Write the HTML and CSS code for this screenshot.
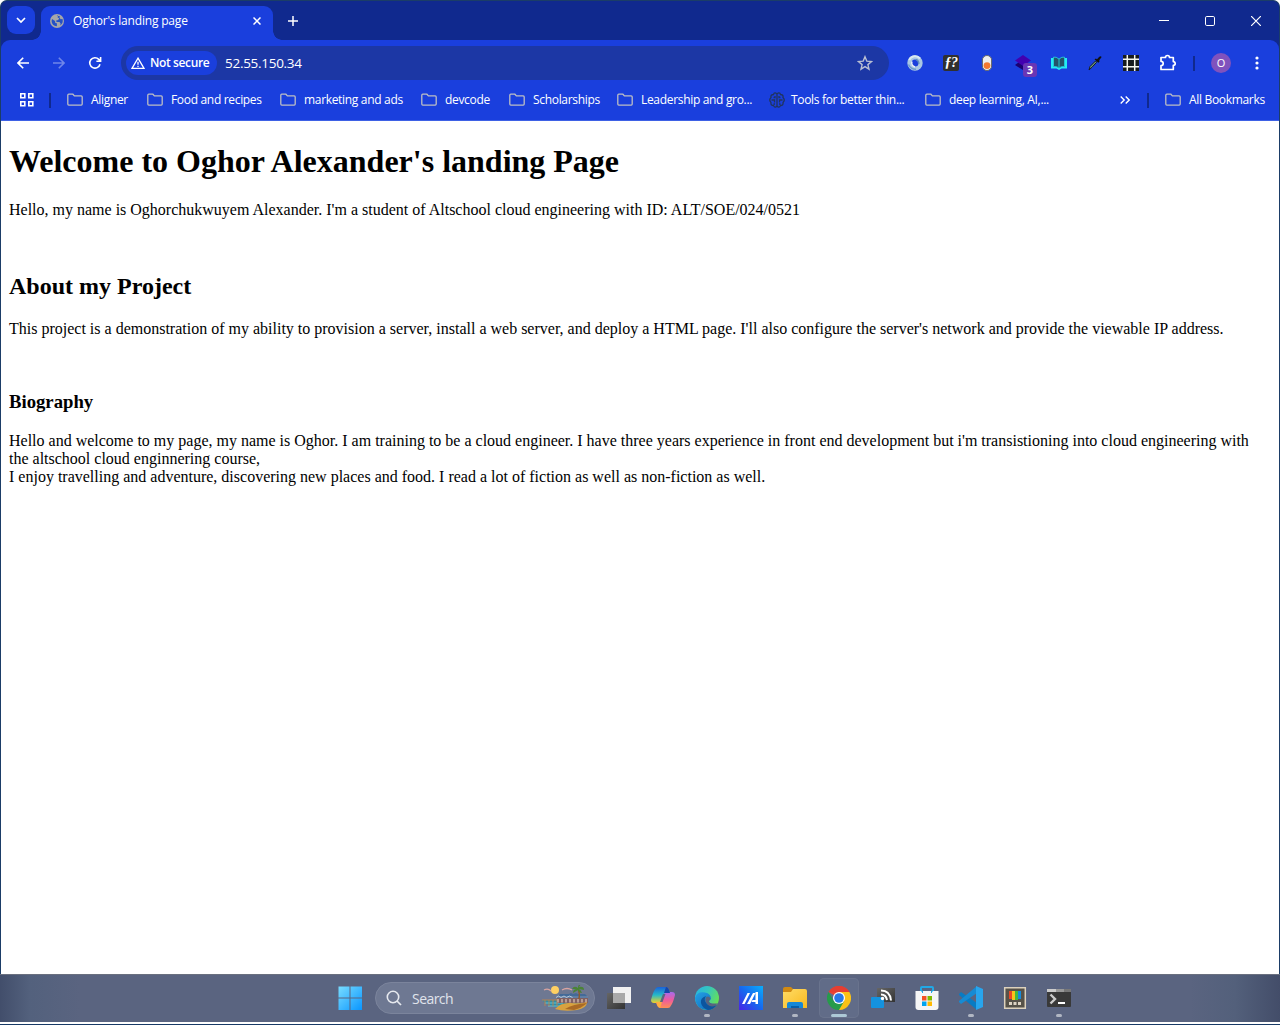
FILE: index.html
```html
<!DOCTYPE html>
<html lang="en">
<head>
<meta charset="utf-8">
<title>Oghor's landing page</title>
<link rel="stylesheet" href="styles.css">
</head>
<body>
<svg width="0" height="0" class="defs">
  <defs>
    <symbol id="folder" viewBox="0 0 16 14"><path d="M.8 2.2q0-1 1-1h4.1l1.5 1.7h6.8q1 0 1 1v7.2q0 1-1 1H1.8q-1 0-1-1z" fill="none" stroke="#bdbfc4" stroke-width="1.3"/></symbol>
    <linearGradient id="winBlue" x1="0" y1="0" x2="1" y2="1"><stop offset="0" stop-color="#79dcff"/><stop offset="1" stop-color="#0996ff"/></linearGradient>
    <linearGradient id="cop1" x1="0" y1="0" x2="0" y2="1"><stop offset="0" stop-color="#1b62d8"/><stop offset=".5" stop-color="#24b9c9"/><stop offset="1" stop-color="#f0d326"/></linearGradient>
    <linearGradient id="cop2" x1="0" y1="0" x2="0" y2="1"><stop offset="0" stop-color="#a66bed"/><stop offset=".5" stop-color="#ee5b9e"/><stop offset="1" stop-color="#ff8d55"/></linearGradient>
    <linearGradient id="edgeTop" x1="0" y1="0" x2="1" y2=".5"><stop offset="0" stop-color="#26b3e8"/><stop offset=".5" stop-color="#35c6bd"/><stop offset="1" stop-color="#65df5a"/></linearGradient>
    <linearGradient id="edgeLow" x1="0" y1="0" x2="1" y2="1"><stop offset="0" stop-color="#25a1e5"/><stop offset="1" stop-color="#0b65b9"/></linearGradient>
    <linearGradient id="asus" x1="0" y1="1" x2="1" y2="0"><stop offset="0" stop-color="#4b22e6"/><stop offset=".5" stop-color="#1768ef"/><stop offset="1" stop-color="#09aefb"/></linearGradient>
    <linearGradient id="fold" x1="0" y1="0" x2="1" y2="1"><stop offset="0" stop-color="#ffdc66"/><stop offset="1" stop-color="#f9b91e"/></linearGradient>
    <linearGradient id="gray" x1="0" y1="0" x2="1" y2="1"><stop offset="0" stop-color="#666"/><stop offset="1" stop-color="#333"/></linearGradient>
  </defs>
</svg>

<div class="window">
  <header class="tabstrip">
    <button class="tab-search" aria-label="Search tabs"><svg width="28" height="28" viewBox="0 0 28 28"><path d="M10 12l4 4 4-4" fill="none" stroke="#fff" stroke-width="1.7"/></svg></button>
    <div class="tab">
      <svg width="14" height="14" viewBox="0 0 14 14"><circle cx="7" cy="7" r="7" fill="#a5a6a9"/><path d="M2 5l3 2 .3 2 1.600.3v3A5.600 5.600 0 0 1 1.600 7zM6.200 1.500L8 1.600 7.600 3.400l1.600.8-1 1.800-2 .4.3 1.500 3 .2 1.200 1.600-.8 1.800a5.600 5.600 0 0 0 2.600-6.400l-1.800.2-1.200-1.500L9.800 2z" fill="#2451c7"/></svg>
      <span class="tab-title">Oghor's landing page</span>
      <svg class="tab-close" width="8" height="8" viewBox="0 0 8 8"><path d="M.5.5l7 7m0-7l-7 7" stroke="#fff" stroke-width="1.500"/></svg>
    </div>
    <svg class="new-tab" width="10" height="10" viewBox="0 0 10 10"><path d="M5 0v10M0 5h10" stroke="#fff" stroke-width="1.500"/></svg>
    <div class="controls">
      <svg width="10" height="10" viewBox="0 0 10 10"><path d="M0 4.500h10" stroke="#fff"/></svg>
      <svg width="10" height="10" viewBox="0 0 10 10"><rect x=".5" y=".5" width="9" height="9" rx="1.300" fill="none" stroke="#fff"/></svg>
      <svg width="10" height="10" viewBox="0 0 10 10"><path d="M0 0l10 10M10 0L0 10" stroke="#fff" stroke-width="1.200"/></svg>
    </div>
  </header>

  <div class="chrome">
    <div class="toolbar">
      <svg width="12" height="12" viewBox="0 0 12 12"><path d="M12 6H1M6.200.8L1 6l5.200 5.200" fill="none" stroke="#fff" stroke-width="1.600"/></svg>
      <svg class="forward" width="12" height="12" viewBox="0 0 12 12"><path d="M0 6h11M5.800.8L11 6l-5.200 5.200" fill="none" stroke="#6f86e9" stroke-width="1.600"/></svg>
      <svg class="reload" width="14" height="14" viewBox="0 0 14 14"><path d="M12 8.200A5.200 5.200 0 1 1 10.800 3.400l1.400 1.300M12.600.9v4.300H8.400" fill="none" stroke="#fff" stroke-width="1.600"/></svg>
      <div class="omnibox">
        <div class="security">
          <svg width="14" height="12" viewBox="0 0 14 12"><path d="M7 1.200L13 11.300H1z" fill="none" stroke="#fff" stroke-width="1.300"/><path d="M7 4.700v3M7 8.700v1.200" stroke="#fff" stroke-width="1.300"/></svg>
          <span>Not secure</span>
        </div>
        <span class="url">52.55.150.34</span>
        <svg class="star" width="16" height="16" viewBox="0 0 16 16"><path d="M8 1.700l1.800 4.400 4.700.4-3.600 3.100 1.100 4.600L8 11.700l-4 2.500 1.100-4.600L1.500 6.500l4.700-.4z" fill="none" stroke="#b9bfd3" stroke-width="1.400"/></svg>
      </div>
      <div class="extensions">
        <svg width="16" height="16" viewBox="0 0 16 16"><circle cx="8" cy="8" r="5.600" fill="none" stroke="#a9c7e3" stroke-width="4.200"/><path d="M2.200 5A6.500 6.500 0 0 1 13 3.500" fill="none" stroke="#d9e9f2" stroke-width="2"/><path d="M5 6.500A4 4 0 0 0 8 12" fill="none" stroke="#e5eff7" stroke-width="1.500"/><path d="M9 4.500Q12 5.500 11.800 9" fill="none" stroke="#608fc2" stroke-width="1.500"/><path d="M1.500 9.500Q4 14.500 9 14.300" fill="none" stroke="#6e9dcc" stroke-width="1.500"/></svg>
        <div class="ext-f"><span>ƒ?</span></div>
        <svg width="16" height="16" viewBox="0 0 16 16"><rect x="3.400" y=".5" width="9.200" height="15" rx="4.500" fill="#eee" stroke="#666"/><circle cx="8" cy="10.600" r="3.400" fill="#f5782f"/></svg>
        <div class="ext-badged">
          <svg width="16" height="16" viewBox="0 0 16 16"><path d="M0 10l7-5 9 5-8 5z" fill="#190070"/><path d="M0 5.500L8 0l8 5.500L8 11z" fill="#4200b0"/></svg>
          <span class="badge">3</span>
        </div>
        <svg width="16" height="16" viewBox="0 0 16 16"><path d="M0 3h2.500v9H6l2 1.300 2-1.300h3.500V3H16v10.500h-5.500L8 15l-2.500-1.500H0z" fill="#23edf3"/><path d="M2.500 2.200Q5 1.500 8 4q3-2.500 5.500-1.800v9.300Q10 11 8 13q-2-2-5.500-1.500z" fill="#24536a" stroke="#23dce3" stroke-width=".8"/><path d="M8 4v8.500" stroke="#27c6cc"/></svg>
        <svg width="16" height="16" viewBox="0 0 16 16"><path d="M2 15L3 11.500l5.500-5.500 1.200 1.200L5 12.200z" fill="#6d9b82" stroke="#171b22"/><path d="M7.500 4.500l1.300-1 1.200.7 2.300-2.500q2-1.200 2.200.5L12.200 5.200l.3 1.300-1 1.300z" fill="#111"/></svg>
        <svg width="16" height="16" viewBox="0 0 16 16"><path d="M0 0h16v16H0z" fill="#161a1c"/><path d="M4.300 0v16M11.700 0v16M0 4.300h16M0 11.700h16" stroke="#f5f5ed" stroke-width="1.500"/></svg>
        <svg width="18" height="18" viewBox="0 0 18 18"><path d="M2 3.500h4.500a2 2 0 0 1 4 0H14.300v4.100a1.900 1.900 0 0 1 0 3.800v4.100H2v-3.800a2.200 2.200 0 0 0 0-4.400z" fill="none" stroke="#fff" stroke-width="1.700" stroke-linejoin="round"/></svg>
      </div>
      <i class="divider"></i>
      <span class="avatar">O</span>
      <svg class="menu" width="4" height="14" viewBox="0 0 4 14"><g fill="#fff"><circle cx="2" cy="2" r="1.600"/><circle cx="2" cy="7" r="1.600"/><circle cx="2" cy="12" r="1.600"/></g></svg>
    </div>

    <nav class="bookmarks">
      <svg width="16" height="16" viewBox="0 0 16 16"><path d="M1.800 1.800h4v4h-4zM9.800 1.800h4v4h-4zM1.800 9.800h4v4h-4zM9.800 9.800h4v4h-4z" fill="none" stroke="#fff" stroke-width="1.600"/></svg>
      <i class="divider"></i>
      <div class="bookmark-list">
        <div><svg width="16" height="14"><use href="#folder"/></svg><span>Aligner</span></div>
        <div><svg width="16" height="14"><use href="#folder"/></svg><span>Food and recipes</span></div>
        <div><svg width="16" height="14"><use href="#folder"/></svg><span>marketing and ads</span></div>
        <div><svg width="16" height="14"><use href="#folder"/></svg><span>devcode</span></div>
        <div><svg width="16" height="14"><use href="#folder"/></svg><span>Scholarships</span></div>
        <div><svg width="16" height="14"><use href="#folder"/></svg><span>Leadership and gro...</span></div>
        <div class="site"><svg width="16" height="16" viewBox="0 0 16 16"><path d="M8 1.200v13.600M8 2Q5.500-.5 4.500 2.500 1.500 2.500 2 5.500-.5 8 2 10.500q-.5 3 2.500 3Q6 16.500 8 14M8 2q2.500-2.500 3.500.5 3 0 2.500 3 2.500 2.500 0 5 .5 3-2.500 3Q10 16.500 8 14M4.500 5.500H6V4M2.500 8h3v2.500M11.500 5.500H10V4M13.500 8h-3v2.500M4.500 12H6M10 12h1.500" fill="none" stroke="#20345f" stroke-width="1.300"/></svg><span>Tools for better thin...</span></div>
        <div><svg width="16" height="14"><use href="#folder"/></svg><span>deep learning, AI,...</span></div>
      </div>
      <svg class="more" width="10" height="8" viewBox="0 0 10 8"><path d="M.7.500L4.200 4 .7 7.500M5.700.500L9.200 4 5.700 7.500" fill="none" stroke="#fff" stroke-width="1.400"/></svg>
      <i class="divider"></i>
      <div class="all"><svg width="16" height="14"><use href="#folder"/></svg><span>All Bookmarks</span></div>
    </nav>
  </div>

  <main class="page">
    <h1>Welcome to Oghor Alexander's landing Page</h1>
    <p>Hello, my name is Oghorchukwuyem Alexander. I'm a student of Altschool cloud engineering with ID: ALT/SOE/024/0521</p>
    <br>
    <h2>About my Project</h2>
    <p>This project is a demonstration of my ability to provision a server, install a web server, and deploy a HTML page. I'll also configure the server's network and provide the viewable IP address.</p>
    <br>
    <h3>Biography</h3>
    <p>Hello and welcome to my page, my name is Oghor. I am training to be a cloud engineer. I have three years experience in front end development but i'm transistioning into cloud engineering with the altschool cloud enginnering course,<br>I enjoy travelling and adventure, discovering new places and food. I read a lot of fiction as well as non-fiction as well.</p>
  </main>
</div>

<footer class="taskbar">
  <svg class="start" width="24" height="24" viewBox="0 0 24 24"><path d="M.5.500H11.500v11H.5zM12.500.500H24v11H12.500zM.5 12.500h11V24H.5zM12.500 12.500H24V24H12.500z" fill="url(#winBlue)"/></svg>
  <div class="search">
    <svg width="16" height="16" viewBox="0 0 16 16"><circle cx="7" cy="7" r="5.700" fill="none" stroke="#e6e9ef" stroke-width="1.600"/><path d="M11 11l4 4" stroke="#e6e9ef" stroke-width="1.700"/></svg>
    <span>Search</span>
    <svg class="scene" width="47" height="26" viewBox="0 0 47 26">
      <path d="M0 15h30l14 2-6 5-16 1q-14-1-20-6z" fill="#328ba6"/><path d="M3 18h18M6 21h16" stroke="#62bfd0"/>
      <path d="M0 15h16M3 15v6M7 15v6M11 15v6M15 14v7" stroke="#bd854a" stroke-width=".9"/>
      <path d="M15 12l3-3h9l2-1 2 1 3-1 2 1h7l3 3v2H15z" fill="#436a98"/><path d="M15 13h31v5H15z" fill="#806062"/><path d="M15 12h31" stroke="#7c92b0"/><path d="M16 14v3.500m4-3.500v3.500m4-3.500v3.500m4-3.500v3.500m4-3.500v3.500m4-3.500v3.500m4-3.500v3.500m4-3.500v3.500" stroke="#dcc4b2" stroke-width="1.200"/>
      <path d="M14 12.500l2.500-1.500 2.500 1.500 3-1.500 2.500 1.500 3-1.500 3 1.500" fill="none" stroke="#d0dbe4" stroke-width=".8"/>
      <path d="M13 24q6-7 16-6 10 1 16-1 0 6-10 8-13 2-22-1z" fill="#d9a23f"/><path d="M23 24q8-5 22-6-5 5-13 7z" fill="#aa6a25"/>
      <circle cx="13" cy="5" r="4" fill="#ffd063"/><path d="M2 5q4-2 7 1M20 5q5-3 10 0" stroke="#d9a4a0" stroke-width="1.300" fill="none"/>
      <path d="M36 4q2 4 1 10" fill="none" stroke="#8f5a2c" stroke-width="1.500"/><path d="M36 3q-4-3-6 1l5 0q-4 0-4 4l5-3q1 3 4 3-1-3-3-4l5 1q0-4-5-3l2-3q-3 0-3 4z" fill="#4a8435"/>
    </svg>
  </div>
  <div class="apps">
    <div><svg width="24" height="24" viewBox="0 0 24 24"><path d="M0 7h18v16H0z" fill="url(#gray)"/><path d="M6 1h18v16H6z" fill="#f1f1f1"/><path d="M6 7h12v10H6z" fill="#a9a9a9"/></svg></div>
    <div><svg width="24" height="24" viewBox="0 0 24 24"><path d="M7 1h8q2 0 3 3l1 3h-3q-3 0-4 4l-1 4q-1 2-3 2H3q-3 0-3-3Q2 6 4 3.500 5 1 7 1z" fill="url(#cop1)"/><path d="M17 22H9q-2 0-3-3l-1-3h3q3 0 4-4l1-4q1-2 3-2h5q3 0 3 3-2 8-4 10.500Q19 22 17 22z" fill="url(#cop2)"/><path d="M15 1q2 0 3 3l1 3h-6z" fill="#1646aa"/><path d="M9 22q-2 0-3-3l-1-3h6z" fill="#ffae3f"/><path d="M12 8h2.500l-3 8H9z" fill="#59647f"/></svg></div>
    <div class="running"><svg width="24" height="24" viewBox="0 0 24 24"><circle cx="12" cy="12" r="12" fill="url(#edgeTop)"/><path d="M0 12Q2 5 10 6.500q6 1.200 6 6.500l-3 3 8 3.500Q17 24 12 24 1 23 0 12z" fill="url(#edgeLow)"/><path d="M11 10q-6 2-5 7 1 5 7 7 5 0 9-5-6 2-10-1-4-4-1-8z" fill="#0c559e"/><path d="M13 10.500q4 1 1 4.500 0 3 6 2.500 2 0 3-.5l-2 2.500q-5 2-8-.500-4-4-2-7.500.5-1 2-1z" fill="#58647f"/></svg></div>
    <div><svg width="24" height="24" viewBox="0 0 24 24"><path d="M0 0h24v24H0z" fill="url(#asus)"/><path d="M3 18L8.500 7H11L5.500 18zM8 18L14 7h2.500L11 18zM16.500 6H19v12h-2.500v-2h-4l1-2h3z" fill="#fff"/></svg></div>
    <div class="running"><svg width="24" height="24" viewBox="0 0 24 24"><path d="M0 3q0-2 2-2h6l2 2v4H0z" fill="#d18a12"/><path d="M0 6h8l2-3h12q2 0 2 2v17H0z" fill="url(#fold)"/><path d="M4 22v-4q0-2 2-2h12q2 0 2 2v4z" fill="#1688d6"/><path d="M8 22v-2h8v2" fill="#075fa9"/></svg></div>
    <div class="running active"><svg width="24" height="24" viewBox="0 0 24 24"><path d="M12 12L1.600 6A12 12 0 0 1 22.400 6z" fill="#ea4335"/><path d="M12 12V6h10.400A12 12 0 0 1 12 24z" fill="#fbc116"/><path d="M12 12l5.200 3L12 24A12 12 0 0 1 1.600 6l5.200 9z" fill="#279b4b"/><path d="M1.600 6A12 12 0 0 1 22.400 6H12z" fill="#e53e32"/><circle cx="12" cy="12" r="6" fill="#fff"/><circle cx="12" cy="12" r="4.800" fill="#2878e8"/></svg></div>
    <div><svg width="24" height="24" viewBox="0 0 24 24"><path d="M6 2h18v14H6z" fill="url(#gray)"/><rect y="11" width="13" height="11" rx="1" fill="#1492df"/><path d="M10 4.500q9 0 10 10M10 8.500q5 0 6 5.500" fill="none" stroke="#fff" stroke-width="2"/><circle cx="11.500" cy="12.500" r="1.700" fill="#fff"/></svg></div>
    <div><svg width="24" height="24" viewBox="0 0 24 24"><path d="M6 6V2q0-1 1-1h10q1 0 1 1v4" fill="none" stroke="#22a8e5" stroke-width="2"/><path d="M.5 5h23v16q0 3-3 3h-17q-3 0-3-3z" fill="#f5f5f5"/><path d="M6 5h1.500v2M18 5h-1.500v2" fill="none" stroke="#22a8e5"/><path d="M7 10h4.500v4.500H7z" fill="#f25022"/><path d="M12.500 10H17v4.500h-4.500z" fill="#7fba00"/><path d="M7 15.500h4.500V20H7z" fill="#00a4ef"/><path d="M12.500 15.500H17V20h-4.500z" fill="#ffb900"/></svg></div>
    <div class="running"><svg width="24" height="24" viewBox="0 0 24 24"><path d="M0 8l2-2 16 11v7L0 9z" fill="#087bc3"/><path d="M0 16l2 2L18 7V0L0 15z" fill="#168bd3"/><path d="M17 0l7 3v18l-7 3z" fill="#28a5ed"/></svg></div>
    <div><svg width="24" height="24" viewBox="0 0 24 24"><path d="M1.700 1.700h20.600v20.600H1.700z" fill="#565249" stroke="#ddd2bd" stroke-width="1.500"/><path d="M6 5h3v8H6z" fill="#e84827"/><path d="M9 5h3v9H9z" fill="#f7c51a"/><path d="M12 5h3v9h-3z" fill="#45b83d"/><path d="M15 5h3v8h-3z" fill="#168bdb"/><path d="M6 16h3v3H6zM10.500 16h3v3h-3zM15 16h3v3h-3z" fill="#ded4c3"/></svg></div>
    <div class="running"><svg width="24" height="24" viewBox="0 0 24 24"><path d="M0 3h24v17q0 1-1 1H1q-1 0-1-1z" fill="#393939"/><path d="M0 3h9v3H0z" fill="#ccc"/><path d="M9 3h8v3H9z" fill="#999"/><path d="M17 3h7v3h-7z" fill="#777"/><path d="M3.500 8.500L8 13l-4.500 4.500" fill="none" stroke="#ccc" stroke-width="2.400"/><path d="M11 17h7" stroke="#fff" stroke-width="2"/></svg></div>
  </div>
</footer>
</body>
</html>
```
FILE: styles.css
```css
* { box-sizing: border-box; }
body {
  margin: 0;
  height: 1025px;
  overflow: hidden;
  background: #fff;
  border-bottom: 1px solid #183a66;
  font: 12px "Open Sans", "Noto Sans", sans-serif;
  color: #fff;
}
.defs { position: absolute; }
svg { display: block; flex: none; }
.window {
  height: 974px;
  border: 1px solid #1b3d67;
  border-bottom: 0;
  border-radius: 7px 7px 0 0;
  background: #10298e;
  overflow: hidden;
}
.tabstrip { height: 39px; display: flex; align-items: flex-start; padding: 5px 0 0 6px; }
.tab-search { width: 28px; height: 28px; padding: 0; border: 0; border-radius: 9px; background: #1a3fdd; }
.tab {
  position: relative;
  width: 232px;
  height: 34px;
  margin-left: 6px;
  padding: 0 12px 5px 9px;
  display: flex;
  align-items: center;
  border-radius: 9px 9px 0 0;
  background: #1a3fdd;
}
.tab::before, .tab::after { content: ""; position: absolute; bottom: 0; width: 9px; height: 9px; }
.tab::before { left: -9px; background: radial-gradient(circle at 0 0, transparent 8.5px, #1a3fdd 9px); }
.tab::after { right: -9px; background: radial-gradient(circle at 100% 0, transparent 8.5px, #1a3fdd 9px); }
.tab-title { margin-left: 9px; letter-spacing: -.19px; white-space: nowrap; }
.tab-close { margin-left: auto; }
.new-tab { margin: 10px 0 0 15px; }
.controls { margin: 10px 18px 0 auto; display: flex; gap: 36px; }
.chrome { height: 81px; background: #1a3fdd; border-radius: 9px 9px 0 0; border-bottom: 1px solid #3e61e5; }
.toolbar { height: 46px; display: flex; align-items: center; padding-left: 16px; }
.forward { margin-left: 24px; }
.reload { margin-left: 23px; }
.omnibox {
  width: 768px;
  height: 34px;
  margin-left: 19px;
  padding: 0 16px 0 5px;
  display: flex;
  align-items: center;
  border-radius: 17px;
  background: #1c37a5;
}
.security {
  width: 91px;
  height: 24px;
  padding-left: 5px;
  display: flex;
  align-items: center;
  gap: 5px;
  border-radius: 12px;
  background: #1a3fdd;
  font-weight: 600;
  letter-spacing: -.38px;
  white-space: nowrap;
}
.security span { margin-top: -1px; }
.url { margin: -1px 0 0 8px; font-size: 13.5px; letter-spacing: -.28px; }
.star { margin-left: auto; }
.extensions { display: flex; align-items: center; margin-left: 18px; gap: 20px; }
.ext-f {
  width: 16px;
  height: 16px;
  border-radius: 2px;
  background: #30302f;
  display: flex;
  justify-content: center;
  align-items: center;
  font: italic bold 14px "Liberation Serif", serif;
  letter-spacing: -.5px;
}
.ext-badged { position: relative; }
.badge {
  position: absolute;
  left: 8px;
  top: 8px;
  width: 14px;
  height: 14px;
  border-radius: 3px;
  background: #6936b5;
  font-size: 11px;
  line-height: 14px;
  font-weight: 700;
  text-align: center;
}
.divider { width: 2px; height: 15px; background: #10298e; flex: none; }
.toolbar .divider { margin-left: 16px; }
.avatar { width: 20px; height: 20px; margin-left: 16px; border-radius: 50%; background: #8052bd; font-size: 11px; line-height: 20px; text-align: center; }
.menu { margin-left: 24px; }
.bookmarks { height: 28px; display: flex; align-items: center; padding-left: 18px; letter-spacing: -.32px; }
.bookmarks > .divider { margin-left: 14px; }
.bookmark-list { width: 1052px; margin-left: 16px; display: grid; grid-template-columns: 80px 133px 141px 88px 108px 152px 156px 1fr; }
.bookmark-list div, .all { display: flex; align-items: center; gap: 8px; white-space: nowrap; }
.bookmark-list span, .all span { margin-top: -1px; }
.bookmark-list .site { gap: 6px; }
.more { margin-left: 1px; }
.bookmarks > .more + .divider { margin-left: 17px; }
.all { margin-left: 16px; }
.page { height: 853px; padding: 1px 8px; background: #fff; color: #000; font: 16px "Liberation Serif", serif; }
.page > :first-child { margin-top: 21px; }
.taskbar {
  height: 48px;
  display: flex;
  align-items: center;
  padding: 0 0 1px 338px;
  border-top: 1px solid #6a707f;
  background: linear-gradient(90deg, #424e6b, #53617d 30px, #5a6480 80px, #5a6480 1190px, #53607b 1235px, #434d69);
}
.search {
  width: 220px;
  height: 32px;
  margin-left: 13px;
  padding: 0 5px 0 10px;
  display: flex;
  align-items: center;
  border: 1px solid #7b849c;
  border-radius: 16px;
  background: #6e7892;
  color: #e0e4ec;
}
.search span { margin-left: 10px; font-size: 14px; letter-spacing: -.55px; }
.scene { margin-left: auto; }
.apps { display: flex; gap: 4px; margin-left: 4px; }
.apps div { position: relative; width: 40px; height: 40px; display: grid; place-items: center; }
.running::after { content: ""; position: absolute; left: 17px; bottom: 1px; width: 6px; height: 3px; border-radius: 2px; background: #b1b7c3; }
.apps .active { border-radius: 5px; background: #616c88; box-shadow: inset 0 0 0 1px #69738d; }
.active::after { left: 12px; width: 16px; background: #adc9d6; }
```
